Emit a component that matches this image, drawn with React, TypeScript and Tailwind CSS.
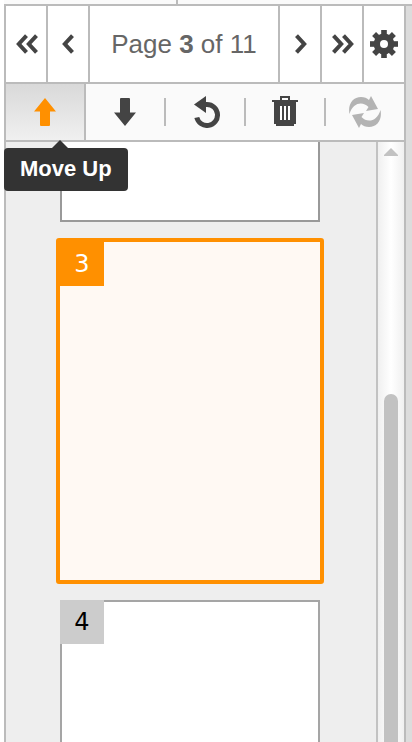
import type { ReactNode } from "react";

const FONT = "font-['Liberation_Sans',Arial,sans-serif]";

type IconProps = { flip?: boolean };

function ChevronIcon({ flip }: IconProps) {
  return (
    <svg viewBox="0 0 12 20" className={flip ? "ml-0.5 h-5 w-3 -scale-x-100" : "h-5 w-3"} aria-hidden="true">
      <path d="M10.5 1.6 2.8 10l7.700 8.400" fill="none" stroke="#444" strokeWidth="4" />
    </svg>
  );
}

function DoubleChevronIcon({ flip }: IconProps) {
  return (
    <svg
      viewBox="0 0 22 20"
      className={flip ? "ml-0.5 h-5 w-[22px] -scale-x-100" : "ml-0.5 h-5 w-[22px]"}
      aria-hidden="true"
    >
      <path d="M10.5 1.6 2.8 10l7.700 8.400M20.5 1.6 12.8 10l7.700 8.400" fill="none" stroke="#444" strokeWidth="4" />
    </svg>
  );
}

function GearIcon() {
  return (
    <svg viewBox="-14 -14 28 28" className="h-7 w-7" aria-hidden="true">
      {[0, 45, 90, 135].map((angle) => (
        <rect key={angle} x="-2.8" y="-14" width="5.6" height="28" fill="#444" transform={`rotate(${angle})`} />
      ))}
      <circle r="7.2" fill="none" stroke="#444" strokeWidth="6.4" />
      <circle r="4" fill="#fff" />
    </svg>
  );
}

function ArrowIcon({ flip }: IconProps) {
  return (
    <svg viewBox="0 0 22 28" className={flip ? "h-7 w-[22px] -scale-y-100" : "h-7 w-[22px]"} aria-hidden="true">
      <path d="M11 0 22 13.500H16V27q0 1-1 1H7q-1 0-1-1V13.500H0z" fill="currentColor" />
    </svg>
  );
}

function UndoIcon() {
  return (
    <svg viewBox="-4 0 30 32" className="h-8 w-[30px]" aria-hidden="true">
      <path d="M0 8.500 12 0v17z" fill="#444" />
      <path d="M11 8.500h2a10.500 10.500 0 1 1-10.200 13" fill="none" stroke="#444" strokeWidth="5" />
    </svg>
  );
}

function TrashIcon() {
  return (
    <svg viewBox="0 0 26 32" className="h-8 w-[26px]" aria-hidden="true">
      <path d="M9 4V1h8v3" fill="none" stroke="#444" strokeWidth="2" />
      <path d="M0 4h26v2h-2v22h-2v2H4v-2H2V6H0z" fill="#444" />
      <path d="M9 10v14M13 10v14M17 10v14" stroke="#fff" strokeWidth="2" />
    </svg>
  );
}

function RefreshIcon() {
  const swirl = "M.5 18C-1.500 8 4 1 12 1c3.500 0 6 1 8 3l2-4 7 13-12 2 2.500-4C14 5 4 6 .5 18z";

  return (
    <svg viewBox="0 0 33 32" className="h-8 w-[33px]" aria-hidden="true">
      <path d={swirl} fill="#b3b3b3" />
      <path d={swirl} fill="#b3b3b3" transform="rotate(180 16 16)" />
    </svg>
  );
}

function NavButton({ label, children }: { label: string; children: ReactNode }) {
  return (
    <button type="button" aria-label={label} className="flex w-10 shrink-0 items-center justify-center bg-white">
      {children}
    </button>
  );
}

function ToolButton({ label, children }: { label: string; children: ReactNode }) {
  return (
    <button type="button" aria-label={label} className="flex flex-1 items-center justify-center text-[#444]">
      {children}
    </button>
  );
}

function Separator() {
  return <span className="h-7 w-0.5 shrink-0 self-center bg-[#bbb]" />;
}

export default function App() {
  return (
    <div className={`flex h-screen flex-col overflow-hidden bg-white pl-1 ${FONT}`}>
      <div className="flex h-1 shrink-0 bg-[#fafafa]">
        <div className="w-[174px] border-r-2 border-[#bbb]" />
      </div>

      <div className="flex min-h-0 flex-1 border-t-2 border-[#bbb] bg-[#dcdcdc] pr-1.5">
        <div className="flex min-w-0 flex-1 flex-col border-x-2 border-[#bbb]">
          <nav className="flex h-[78px] shrink-0 gap-0.5 border-b-2 border-[#bbb] bg-[#bbb]" aria-label="Pages">
            <NavButton label="First page">
              <DoubleChevronIcon />
            </NavButton>
            <NavButton label="Previous page">
              <ChevronIcon />
            </NavButton>
            <p className="flex flex-1 items-center justify-center bg-white text-[26px] whitespace-pre text-[#666]">
              Page <b>3</b> of 11
            </p>
            <NavButton label="Next page">
              <ChevronIcon flip />
            </NavButton>
            <NavButton label="Last page">
              <DoubleChevronIcon flip />
            </NavButton>
            <NavButton label="Settings">
              <GearIcon />
            </NavButton>
          </nav>

          <div className="flex h-[58px] shrink-0 border-b-2 border-[#bbb] bg-[#fafafa]" role="toolbar">
            <div className="relative flex flex-1 border-r-2 border-[#bbb] bg-linear-to-b from-[#d9d9d9] to-[#f0f0f0]">
              <button
                type="button"
                aria-label="Move Up"
                aria-describedby="move-up-tip"
                className="flex flex-1 items-center justify-center text-[#ff9000]"
              >
                <ArrowIcon />
              </button>
              <div
                id="move-up-tip"
                role="tooltip"
                className="absolute top-16 -left-0.5 z-10 rounded bg-[#333] px-4 pt-[5px] pb-[7px] text-[22px] leading-[31px] font-bold whitespace-nowrap text-white"
              >
                <span className="absolute -top-2 left-12 border-x-8 border-b-8 border-x-transparent border-b-[#333]" />
                Move Up
              </div>
            </div>
            <ToolButton label="Move Down">
              <ArrowIcon flip />
            </ToolButton>
            <Separator />
            <ToolButton label="Rotate">
              <UndoIcon />
            </ToolButton>
            <Separator />
            <ToolButton label="Delete">
              <TrashIcon />
            </ToolButton>
            <Separator />
            <ToolButton label="Refresh">
              <RefreshIcon />
            </ToolButton>
          </div>

          <div className="flex min-h-0 flex-1 bg-[#eee]">
            <main className="flex min-w-0 flex-1 flex-col gap-4 overflow-hidden pr-14 pl-[54px] font-['DejaVu_Sans',Verdana,sans-serif] text-2xl">
              <section className="h-20 shrink-0 border-2 border-t-0 border-[#999] bg-white" aria-label="Page 2" />
              <section className="-mx-1 h-[346px] shrink-0 rounded-[3px] border-4 border-[#ff9000] bg-[#fff9f3]">
                <div className="flex h-11 w-11 items-center justify-center bg-[#ff9000] text-white">3</div>
              </section>
              <section className="h-[342px] shrink-0 border-2 border-[#a5a5a5] bg-white">
                <div className="-mt-0.5 -ml-0.5 flex h-11 w-11 items-center justify-center bg-[#ccc] text-black">4</div>
              </section>
            </main>

            <div className="flex w-7 shrink-0 flex-col items-center gap-[238px] border-l-2 border-[#c2c2c2] bg-linear-to-r from-[#f0f0f0] via-white to-[#f0f0f0] pt-1.5">
              <button type="button" aria-label="Scroll up">
                <svg viewBox="0 0 14 8" className="block h-2 w-3.5" aria-hidden="true">
                  <path d="M7 0 14 7v1H0V7z" fill="#c2c2c2" />
                </svg>
              </button>
              <div className="w-3.5 flex-1 rounded-t-[7px] bg-[#c2c2c2]" />
            </div>
          </div>
        </div>
      </div>
    </div>
  );
}
